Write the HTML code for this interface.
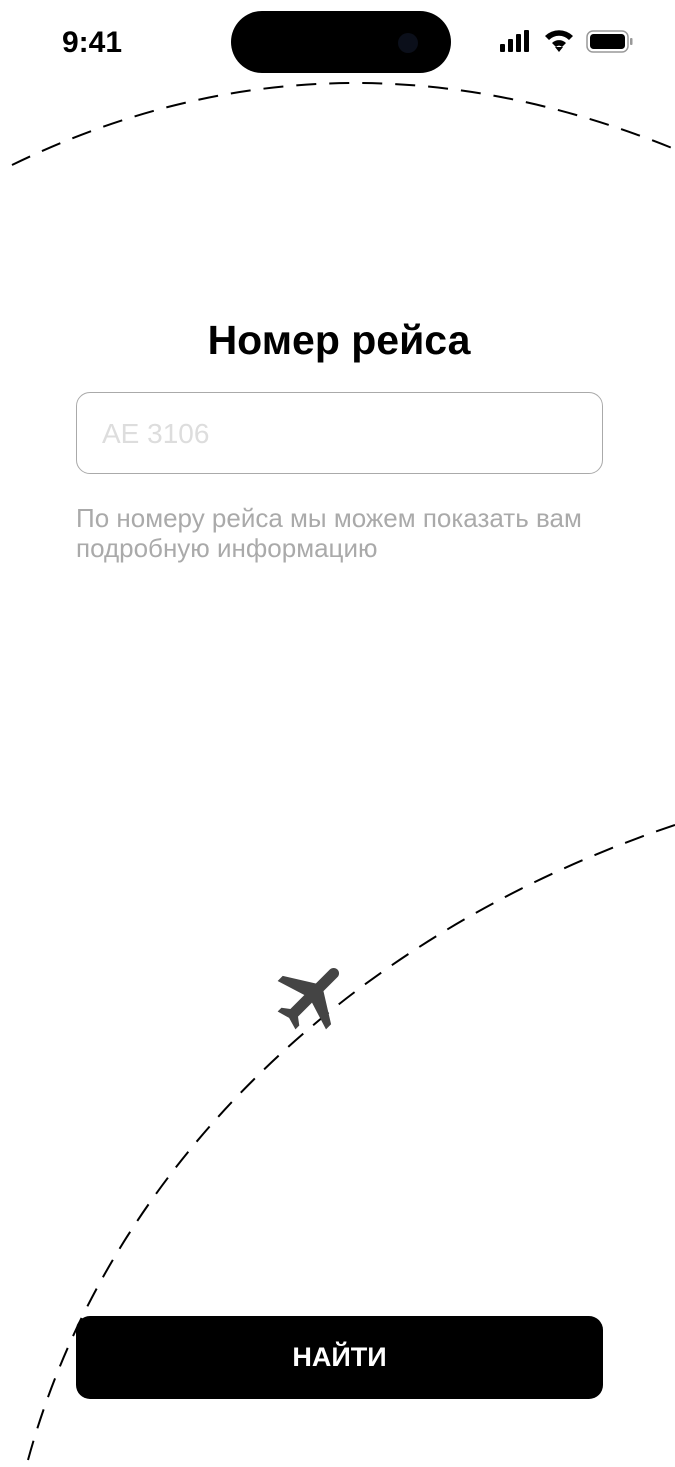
<!DOCTYPE html>
<html><head><meta charset="utf-8"><style>
body{margin:0;width:675px;height:1467px;background:#fff;position:relative;overflow:hidden;font-family:"Liberation Sans",sans-serif}
.abs{position:absolute}
</style></head><body>
<svg class="abs" style="left:0;top:0" width="675" height="1467">
<path d="M12,165 Q330,10 672,148" fill="none" stroke="#000" stroke-width="2" stroke-dasharray="20,13"/>
<path d="M28,1460 C110,1160 360,930 675,825" fill="none" stroke="#000" stroke-width="2" stroke-dasharray="20,13"/>
<g transform="translate(312,995) rotate(45) scale(3.6) translate(-11.5,-12)">
<path fill="#444" d="M21 16v-2l-8-5V3.5c0-.83-.67-1.5-1.5-1.5S10 2.67 10 3.5V9l-8 5v2l8-2.5V19l-2 1.5V22l3.5-1 3.5 1v-1.5L13 19v-5.5l8 2.5z"/>
</g>
<rect x="500" y="44" width="5" height="8" rx="1" fill="#000"/>
<rect x="508" y="39" width="5" height="13" rx="1" fill="#000"/>
<rect x="516" y="34" width="5" height="18" rx="1" fill="#000"/>
<rect x="524" y="30" width="5" height="22" rx="1" fill="#000"/>
<path d="M545,36 A20,20 0 0 1 573,36 L569,40 A14,14 0 0 0 549,40 Z" fill="#000"/>
<path d="M552,43 A10,10 0 0 1 566,43 L562,47 A4,4 0 0 0 556,47 Z" fill="#000"/>
<path d="M555,47 L559,52 L563,47 Z" fill="#000"/>
<rect x="587" y="31" width="41" height="21" rx="6" fill="none" stroke="#999" stroke-width="1.5"/>
<rect x="590" y="34" width="35" height="15" rx="3.5" fill="#000"/>
<rect x="630" y="38" width="2.5" height="7" rx="1" fill="#999"/>
</svg>
<div class="abs" style="left:62px;top:26px;font-size:30px;font-weight:bold;color:#000">9:41</div>
<div class="abs" style="left:231px;top:11px;width:220px;height:62px;border-radius:31px;background:#000"></div>
<div class="abs" style="left:398px;top:33px;width:20px;height:20px;border-radius:50%;background:#0b0f1a"></div>
<div class="abs" style="left:0;width:678px;top:317px;text-align:center;font-size:41px;font-weight:bold;color:#000">Номер рейса</div>
<div class="abs" style="left:76px;top:392px;width:527px;height:82px;border:1.5px solid #aaa;border-radius:14px;box-sizing:border-box"></div>
<div class="abs" style="left:102px;top:418px;font-size:28px;color:#ddd">AE 3106</div>
<div class="abs" style="left:76px;top:503px;font-size:26px;line-height:30px;color:#aaa">По номеру рейса мы можем показать вам<br>подробную информацию</div>
<div class="abs" style="left:76px;top:1316px;width:527px;height:83px;border-radius:14px;background:#000;color:#fff;font-size:27px;font-weight:bold;text-align:center;line-height:83px">НАЙТИ</div>
</body></html>
